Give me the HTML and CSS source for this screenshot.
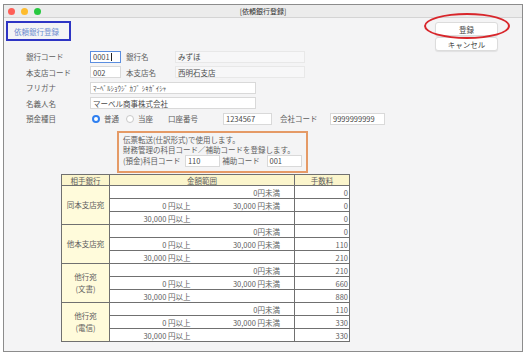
FILE: index.html
```html
<!DOCTYPE html>
<html lang="ja">

<head>
    <meta charset="UTF-8">
    <title>依頼銀行登録</title>
    <link rel="stylesheet" href="styles.css">
</head>

<body>
    <div class="window">
        <div class="titlebar">
            <div class="lights">
                <span class="light red"></span>
                <span class="light yellow"></span>
                <span class="light green"></span>
            </div>
            <div class="title">[依頼銀行登録]</div>
            <div></div>
        </div>

        <div class="top">
            <div class="caption">依頼銀行登録</div>
            <div class="actions">
                <button class="btn" type="submit">登録</button>
                <button class="btn" type="button">キャンセル</button>
                <span class="mark"></span>
            </div>
        </div>

        <div class="form">
            <div class="row">
                <span class="label">銀行コード</span>
                <span class="field focus w-code">0001<span class="caret"></span></span>
                <span class="sublabel">銀行名</span>
                <span class="field readonly w-name">みずほ</span>
            </div>
            <div class="row">
                <span class="label">本支店コード</span>
                <span class="field w-code">002</span>
                <span class="sublabel">本支店名</span>
                <span class="field readonly w-name">西明石支店</span>
            </div>
            <div class="row">
                <span class="label">フリガナ</span>
                <span class="field w-long kana">ﾏｰﾍﾞﾙｼｮｳｼﾞ ｶﾌﾞ ｼｷｶﾞｲｼｬ</span>
            </div>
            <div class="row">
                <span class="label">名義人名</span>
                <span class="field w-long">マーベル商事株式会社</span>
            </div>
            <div class="row">
                <span class="label">預金種目</span>
                <span class="radio on"></span><span class="choice">普通</span>
                <span class="radio"></span><span class="choice">当座</span>
                <span class="label-acct">口座番号</span>
                <span class="field w-acct">1234567</span>
                <span class="label-company">会社コード</span>
                <span class="field w-company">9999999999</span>
            </div>
        </div>

        <div class="note">
            <div>伝票転送(仕訳形式)で使用します。</div>
            <div>財務管理の科目コード／補助コードを登録します。</div>
            <div class="note-row">
                <span class="note-label">(預金)科目コード</span>
                <span class="field w-sub">110</span>
                <span class="note-label2">補助コード</span>
                <span class="field w-sub">001</span>
            </div>
        </div>

        <table class="fees">
            <colgroup>
                <col class="c-bank">
                <col class="c-from">
                <col class="c-to">
                <col class="c-fee">
            </colgroup>
            <tr>
                <th>相手銀行</th>
                <th colspan="2">金額範囲</th>
                <th>手数料</th>
            </tr>
            <tr>
                <td class="bank" rowspan="3">同本支店宛</td>
                <td class="from"></td><td class="to">0円未満</td><td class="fee">0</td>
            </tr>
            <tr><td class="from">0 円以上</td><td class="to">30,000 円未満</td><td class="fee">0</td></tr>
            <tr><td class="from">30,000 円以上</td><td class="to"></td><td class="fee">0</td></tr>
            <tr>
                <td class="bank" rowspan="3">他本支店宛</td>
                <td class="from"></td><td class="to">0円未満</td><td class="fee">0</td>
            </tr>
            <tr><td class="from">0 円以上</td><td class="to">30,000 円未満</td><td class="fee">110</td></tr>
            <tr><td class="from">30,000 円以上</td><td class="to"></td><td class="fee">210</td></tr>
            <tr>
                <td class="bank" rowspan="3">他行宛<br>(文書)</td>
                <td class="from"></td><td class="to">0円未満</td><td class="fee">210</td>
            </tr>
            <tr><td class="from">0 円以上</td><td class="to">30,000 円未満</td><td class="fee">660</td></tr>
            <tr><td class="from">30,000 円以上</td><td class="to"></td><td class="fee">880</td></tr>
            <tr>
                <td class="bank" rowspan="3">他行宛<br>(電信)</td>
                <td class="from"></td><td class="to">0円未満</td><td class="fee">110</td>
            </tr>
            <tr><td class="from">0 円以上</td><td class="to">30,000 円未満</td><td class="fee">330</td></tr>
            <tr><td class="from">30,000 円以上</td><td class="to"></td><td class="fee">330</td></tr>
        </table>
    </div>
</body>

</html>
```

FILE: styles.css
```css
* {
    box-sizing: border-box;
}

body {
    margin: 0;
    background: #fff;
    font-family: "Noto Sans CJK JP", "Noto Sans", sans-serif;
    font-size: 7.5px;
    color: #5e5e5e;
}

.window {
    margin: 4px 0 0 3px;
    width: 520px;
    height: 348px;
    border: 1px solid #8c8c8c;
    background: #f4f4f5;
}

/* title bar */
.titlebar {
    display: grid;
    grid-template-columns: 1fr auto 1fr;
    align-items: center;
    height: 13px;
    background: #ececec;
    border-bottom: 1px solid #d4d4d4;
}

.lights {
    display: flex;
    gap: 6px;
    padding-left: 4px;
}

.light {
    width: 7px;
    height: 7px;
    border-radius: 50%;
}

.red { background: #fe5f57; }
.yellow { background: #febc2e; }
.green { background: #28c840; }

.title {
    color: #333;
    font-size: 7px;
}

/* caption and buttons */
.top {
    display: flex;
    justify-content: space-between;
    align-items: flex-start;
    height: 31px;
}

.caption {
    display: flex;
    align-items: center;
    margin: 3px 0 0 2px;
    width: 65px;
    height: 20px;
    padding-left: 6px;
    border: 2px solid #2e35c4;
    color: #6f8fd0;
}

.actions {
    position: relative;
    display: flex;
    flex-direction: column;
    gap: 1px;
    margin: 4px 24px 0 0;
}

.btn {
    width: 63px;
    height: 14px;
    padding: 0;
    border: 1px solid #dcdcdc;
    border-radius: 3px;
    background: #fff;
    box-shadow: 0 1px 1px rgba(0, 0, 0, 0.08);
    font: inherit;
    color: #444;
}

.mark {
    position: absolute;
    left: -11px;
    top: -9px;
    width: 86px;
    height: 26px;
    border: 2px solid #d8262b;
    border-radius: 43px / 13px;
}

/* form rows */
.form {
    padding-left: 22px;
}

.row {
    display: flex;
    align-items: center;
    height: 15.5px;
}

.label {
    width: 64px;
}

.sublabel {
    width: 49px;
    margin-left: 5px;
}

.field {
    display: flex;
    align-items: center;
    height: 12px;
    padding: 0 2px;
    border: 1px solid #d9d9d9;
    background: #fff;
    color: #4a4a4a;
    white-space: nowrap;
}

.field.focus {
    border: 1.5px solid #5b8ee0;
}

.field.readonly {
    border-color: #e8e8e8;
    background: #f7f7f8;
}

.caret {
    width: 1px;
    height: 8px;
    margin-left: 1px;
    background: #222;
}

.kana {
    font-size: 7px;
}

.w-code { width: 31px; }
.w-name { width: 130px; }
.w-long { width: 166px; }
.w-acct { width: 49px; }
.w-company { width: 55px; }
.w-sub { width: 36px; }

.radio {
    width: 8px;
    height: 8px;
    margin-left: 2px;
    border: 1px solid #c8c8c8;
    border-radius: 50%;
    background: #fff;
}

.radio.on {
    border: 2.5px solid #2f7ff0;
}

.choice {
    margin-left: 4px;
    width: 20px;
}

.label-acct {
    margin-left: 10px;
    width: 55px;
}

.label-company {
    margin-left: 8px;
    width: 50px;
}

/* orange note */
.note {
    margin: 4.5px 0 0 113px;
    width: 191px;
    height: 42px;
    padding: 2px 4px;
    border: 2px solid #e59a66;
    line-height: 10px;
}

.note-row {
    display: flex;
    align-items: center;
    height: 12px;
}

.note-label {
    width: 63px;
}

.note-label2 {
    width: 45px;
    margin-left: 2px;
}

/* fee table */
.fees {
    margin: 1px 0 0 57px;
    width: 288px;
    border-collapse: collapse;
    border: 1px solid #555;
    table-layout: fixed;
}

.c-bank { width: 48px; }
.c-from { width: 85px; }
.c-to { width: 100px; }
.c-fee { width: 55px; }

.fees th,
.fees td {
    height: 13px;
    padding: 0;
    border: 1px solid #707070;
    font-weight: normal;
    line-height: 9px;
    white-space: nowrap;
}

.fees th {
    height: 11px;
    background: #fbf5cc;
    text-align: center;
}

.fees .bank {
    background: #fffbdb;
    text-align: center;
    line-height: 12px;
}

.fees .from {
    border-right: none;
    padding-right: 4px;
    text-align: right;
    background: #fff;
}

.fees .to {
    border-left: none;
    padding-right: 14px;
    text-align: right;
    background: #fff;
}

.fees .fee {
    padding-right: 1px;
    text-align: right;
    background: #fff;
}
```
